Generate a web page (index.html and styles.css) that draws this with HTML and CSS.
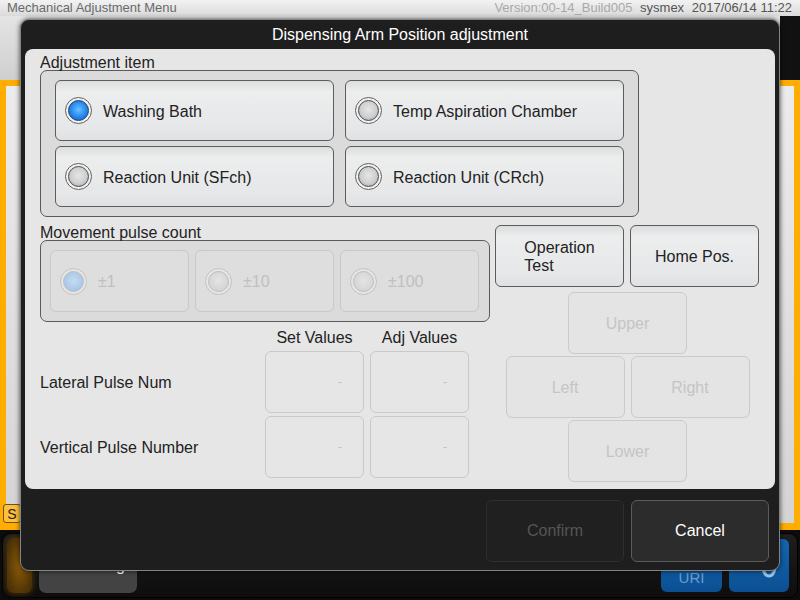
FILE: index.html
```html
<!DOCTYPE html>
<html lang="en">
<head>
    <meta charset="UTF-8">
    <title>Mechanical Adjustment Menu</title>
    <link rel="stylesheet" href="styles.css">
</head>
<body>
    <!-- Background screen -->
    <div class="app">
        <div class="topbar">
            <span class="menu-name">Mechanical Adjustment Menu</span>
            <span class="info">
                <span class="ver">Version:00-14_Build005</span>
                <span class="user">sysmex</span>
                <span class="time">2017/06/14 11:22</span>
            </span>
        </div>
        <div class="tabrow">
            <div class="tabs"></div>
            <div class="tab-end"></div>
        </div>
        <div class="frame">
            <div class="frame-body"></div>
            <button class="s-button">S</button>
        </div>
        <div class="toolbar">
            <div class="toolbar-panel">
                <div class="glow-button"></div>
                <div class="gray-button">Setting</div>
                <div class="toolbar-space"></div>
                <div class="blue-button uri">URI</div>
                <div class="blue-button power">
                    <svg width="18" height="26" viewBox="0 0 18 26"><ellipse cx="9" cy="14" rx="6" ry="9" fill="none" stroke="#9cc4ea" stroke-width="3"/></svg>
                </div>
            </div>
        </div>
    </div>

    <!-- Dialog -->
    <div class="dialog">
        <div class="dialog-title">Dispensing Arm Position adjustment</div>

        <div class="panel">
            <div class="group-label">Adjustment item</div>
            <div class="group items">
                <button class="opt-btn"><span class="radio on"></span>Washing Bath</button>
                <button class="opt-btn"><span class="radio"></span>Temp Aspiration Chamber</button>
                <button class="opt-btn"><span class="radio"></span>Reaction Unit (SFch)</button>
                <button class="opt-btn"><span class="radio"></span>Reaction Unit (CRch)</button>
            </div>

            <div class="lower">
                <div class="left-col">
                    <div class="group-label pulse-label">Movement pulse count</div>
                    <div class="group pulses">
                        <button class="opt-btn small disabled"><span class="radio on"></span>±1</button>
                        <button class="opt-btn small disabled"><span class="radio"></span>±10</button>
                        <button class="opt-btn small disabled"><span class="radio"></span>±100</button>
                    </div>

                    <div class="values">
                        <div></div>
                        <div class="col-head">Set Values</div>
                        <div class="col-head">Adj Values</div>

                        <div class="row-label">Lateral Pulse Num</div>
                        <div class="value-box">-</div>
                        <div class="value-box">-</div>

                        <div class="row-label">Vertical Pulse Number</div>
                        <div class="value-box">-</div>
                        <div class="value-box">-</div>
                    </div>
                </div>

                <div class="right-col">
                    <div class="actions">
                        <button class="btn"><span class="two-line">Operation<br>Test</span></button>
                        <button class="btn">Home Pos.</button>
                    </div>
                    <div class="dpad">
                        <button class="btn disabled up">Upper</button>
                        <button class="btn disabled">Left</button>
                        <button class="btn disabled">Right</button>
                        <button class="btn disabled down">Lower</button>
                    </div>
                </div>
            </div>
        </div>

        <div class="dialog-footer">
            <button class="dark-btn confirm">Confirm</button>
            <button class="dark-btn cancel">Cancel</button>
        </div>
    </div>
</body>
</html>
```

FILE: styles.css
```css
/* General */
* {
    box-sizing: border-box;
}

body {
    margin: 0;
    width: 800px;
    height: 600px;
    overflow: hidden;
    position: relative;
    font-family: "Liberation Sans", Arial, sans-serif;
    background-color: #0c0c0c;
}

button {
    font-family: inherit;
    margin: 0;
}

/* Background screen */
.app {
    display: flex;
    flex-direction: column;
    height: 600px;
}

.topbar {
    height: 16px;
    display: flex;
    justify-content: space-between;
    align-items: center;
    padding: 0 8px 0 7px;
    background: linear-gradient(#f2f2f2, #dadada);
    font-size: 13px;
    line-height: 14px;
    color: #6a6a6a;
}

.topbar .ver {
    color: #a9a9a9;
}

.topbar .user,
.topbar .time {
    color: #555;
    margin-left: 4px;
}

.tabrow {
    height: 64px;
    display: flex;
}

.tabs {
    flex: 1;
    background: linear-gradient(#e4e4e4, #cfcfcf);
}

.tab-end {
    width: 20px;
    background-color: #111;
}

.frame {
    height: 450px;
    border: 6px solid #ffae00;
    border-bottom-width: 7px;
    background: linear-gradient(#ececec, #d4d4d4);
    display: flex;
    flex-direction: column;
}

.frame-body {
    flex: 1;
}

.s-button {
    width: 18px;
    height: 19px;
    margin: 0 0 0 -3px;
    padding: 0;
    font-size: 14px;
    color: #222;
    background-color: #ffbf3a;
    border: 1px solid #6b5320;
    border-radius: 3px;
}

.toolbar {
    flex: 1;
    padding: 3px 2px 2px;
    background-color: #0c0c0c;
}

.toolbar-panel {
    height: 100%;
    display: flex;
    align-items: center;
    gap: 7px;
    padding: 0 8px 0 4px;
    border-radius: 9px;
    border: 1px solid #000;
    background: linear-gradient(#1e1e1e, #0d0d0d);
}

.glow-button {
    width: 25px;
    height: 55px;
    border-radius: 6px;
    background: radial-gradient(#8a5a08, #3c2706);
    box-shadow: 0 0 6px #5a3c05;
}

.gray-button {
    width: 98px;
    height: 55px;
    flex: none;
    border-radius: 7px;
    background-color: #434343;
    color: #fff;
    font-size: 16px;
    display: flex;
    align-items: center;
    justify-content: flex-end;
    padding: 0 12px 0 0;
}

.toolbar-space {
    flex: 1;
}

.blue-button {
    height: 53px;
    border-radius: 6px;
    background: linear-gradient(#1466b0, #0b4f92);
    display: flex;
    justify-content: center;
    align-items: flex-end;
}

.blue-button.uri {
    width: 61px;
    padding-bottom: 6px;
    color: #6c9ccc;
    font-size: 15px;
}

.blue-button.power {
    width: 60px;
    align-items: center;
    padding-left: 20px;
}

/* Dialog */
.dialog {
    position: absolute;
    left: 20px;
    top: 19px;
    width: 760px;
    height: 552px;
    display: flex;
    flex-direction: column;
    padding: 0 4px;
    background-color: #1e1e1e;
    border: 1px solid #858585;
    border-radius: 9px;
    box-shadow: 0 0 5px rgba(0, 0, 0, 0.7);
}

.dialog-title {
    height: 29px;
    line-height: 29px;
    text-align: center;
    color: #fff;
    font-size: 16px;
}

.panel {
    height: 440px;
    padding: 5px 15px 0;
    background-color: #e6e6e6;
    border-radius: 8px;
    color: #222;
}

.group-label {
    font-size: 16px;
    line-height: 18px;
    height: 16px;
}

.group {
    background-color: #dbdbdb;
    border: 1px solid #5a5a5a;
    border-radius: 7px;
}

.items {
    width: 599px;
    height: 147px;
    padding: 9px 14px;
    display: grid;
    grid-template-columns: 279px 279px;
    grid-auto-rows: 61px;
    column-gap: 11px;
    row-gap: 5px;
}

.opt-btn {
    display: flex;
    align-items: center;
    gap: 11px;
    padding: 2px 0 0 9px;
    font-size: 16px;
    color: #222;
    text-align: left;
    background: linear-gradient(#dcdddf, #eceded 18%, #e6e7e9 80%, #e0e1e3);
    border: 1px solid #5c5c5c;
    border-radius: 6px;
}

/* Radio indicator */
.radio {
    width: 27px;
    height: 27px;
    flex: none;
    margin-top: -2px;
    border-radius: 50%;
    border: 1px solid #606060;
    background-color: #f2f2f2;
    display: flex;
    justify-content: center;
    align-items: center;
}

.radio::after {
    content: "";
    width: 19px;
    height: 19px;
    border-radius: 50%;
    border: 1px solid #4a4a4a;
    background: radial-gradient(circle at 50% 45%, #e6e6e6 0%, #cfcfcf 55%, #9a9a9a 100%);
}

.radio.on::after {
    border-color: #1c3c70;
    background: radial-gradient(circle at 50% 45%, #6cc0ff 0%, #2a8cf0 50%, #0a56c0 100%);
}

.opt-btn.disabled {
    color: #c0c0c0;
    background: #dedede;
    border-color: #c8c8c8;
}

.opt-btn.disabled .radio {
    border-color: #c2c2c2;
    background-color: #e6e6e6;
}

.opt-btn.disabled .radio::after {
    border-color: #bdbdbd;
    background: radial-gradient(circle at 50% 45%, #e4e4e4, #cfcfcf);
}

.opt-btn.disabled .radio.on::after {
    background: radial-gradient(circle at 50% 45%, #c4dcf2, #9cbfe2);
}

/* Lower area */
.lower {
    display: flex;
    gap: 5px;
}

.left-col {
    width: 450px;
}

.pulse-label {
    margin-top: 7px;
}

.pulses {
    height: 82px;
    padding: 9px;
    display: flex;
    gap: 6px;
}

.pulses .opt-btn {
    width: 139px;
    height: 62px;
}

.values {
    margin-top: 5px;
    display: grid;
    grid-template-columns: 219px 99px 99px;
    grid-template-rows: 21px 62px 62px;
    column-gap: 6px;
    row-gap: 3px;
    font-size: 16px;
}

.col-head {
    text-align: center;
    line-height: 18px;
    padding-top: 2px;
    color: #222;
}

.row-label {
    display: flex;
    align-items: center;
    padding-top: 2px;
}

.value-box {
    display: flex;
    justify-content: flex-end;
    align-items: center;
    padding-right: 21px;
    font-size: 12px;
    color: #c0c0c0;
    border: 1px solid #c9c9c9;
    border-radius: 6px;
}

.right-col {
    width: 265px;
    margin-top: 8px;
}

.actions {
    display: flex;
    gap: 6px;
}

.btn {
    height: 62px;
    display: flex;
    justify-content: center;
    align-items: center;
    padding: 2px 0 0;
    font-size: 16px;
    color: #222;
    background: linear-gradient(#dcdddf, #eceded 18%, #e6e7e9 80%, #e0e1e3);
    border: 1px solid #5c5c5c;
    border-radius: 6px;
}

.actions .btn {
    width: 129px;
}

.two-line {
    text-align: left;
    line-height: 18px;
}

.dpad {
    width: 244px;
    margin: 5px auto 0;
    display: grid;
    grid-template-columns: 119px 119px;
    grid-auto-rows: 62px;
    column-gap: 6px;
    row-gap: 2px;
}

.dpad .up,
.dpad .down {
    grid-column: 1 / 3;
    width: 119px;
    justify-self: center;
}

.btn.disabled {
    color: #c4c4c4;
    background: #e4e4e4;
    border-color: #cbcbcb;
}

/* Footer buttons */
.dialog-footer {
    flex: 1;
    display: flex;
    justify-content: flex-end;
    gap: 7px;
    padding: 11px 6px 0 0;
}

.dark-btn {
    width: 138px;
    height: 62px;
    font-size: 16px;
    border-radius: 6px;
}

.confirm {
    color: #555;
    background-color: #202020;
    border: 1px solid #2e2e2e;
}

.cancel {
    color: #fff;
    background-color: #2c2c2c;
    border: 1px solid #5c5c5c;
}
```
